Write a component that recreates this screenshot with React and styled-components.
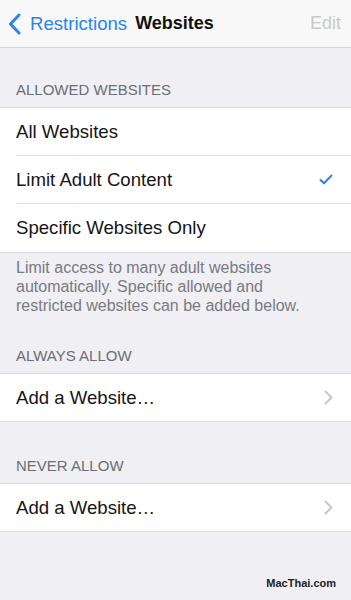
import React from "react";
import styled, { createGlobalStyle } from "styled-components";

const GlobalStyle = createGlobalStyle`
    html, body {
        margin: 0;
        padding: 0;
        background: #efeff4;
    }
    body {
        font-family: "Liberation Sans", Arial, sans-serif;
        -webkit-font-smoothing: antialiased;
    }
`

const Screen = styled.div`
    width: 351px;
    height: 600px;
    background: #efeff4;
    display: flex;
    flex-direction: column;
    overflow: hidden;
`

const NavBar = styled.div`
    box-sizing: border-box;
    height: 48px;
    background: #f8f8f8;
    border-bottom: 1px solid #d6d6da;
    display: flex;
    align-items: center;
    padding: 0 10px 0 8px;
`

const BackButton = styled.div`
    display: flex;
    align-items: center;
    gap: 9px;
    color: #2a84ec;
    font-size: 18.6px;
`

const Title = styled.div`
    margin-left: 8px;
    font-size: 18px;
    font-weight: bold;
    color: #111;
`

const EditButton = styled.div`
    margin-left: auto;
    font-size: 18px;
    color: #c9c9cd;
`

const SectionHeader = styled.div`
    padding: ${props => props.$top}px 16px 8px 16px;
    font-size: 15px;
    line-height: 18px;
    color: #6d6d72;
    text-transform: uppercase;
`

const Group = styled.div`
    background: #fff;
    border-top: 1px solid #dcdce0;
    border-bottom: 1px solid #dcdce0;
`

const Row = styled.div`
    padding-left: 16px;
`

const RowInner = styled.div`
    box-sizing: border-box;
    height: ${props => props.$height || 47}px;
    display: flex;
    align-items: center;
    padding-right: 18px;
    font-size: 18.6px;
    color: #151515;
    border-bottom: ${props => (props.$last ? "none" : "1px solid #e2e2e6")};
`

const RowAccessory = styled.div`
    margin-left: auto;
    display: flex;
    align-items: center;
`

const Footer = styled.div`
    padding: 5px 34px 0 16px;
    font-size: 16px;
    line-height: 19px;
    color: #7a7a7f;
`

const Watermark = styled.div`
    margin-top: auto;
    align-self: flex-end;
    padding: 0 15px 11px 0;
    font-size: 11px;
    font-weight: bold;
    color: #222;
`

const Chevron = () => (
    <svg width="13" height="22" viewBox="0 0 13 22">
        <path d="M11 2 L2.5 11 L11 20" fill="none" stroke="#2a84ec" strokeWidth="3" strokeLinecap="round" strokeLinejoin="round" />
    </svg>
)

const Check = () => (
    <svg width="14" height="11" viewBox="0 0 14 11">
        <path d="M1.5 6 L5 9.3 L12.5 1.5" fill="none" stroke="#2a84ec" strokeWidth="2" strokeLinecap="round" strokeLinejoin="round" />
    </svg>
)

const Disclosure = () => (
    <svg width="9" height="15" viewBox="0 0 9 15">
        <path d="M1.5 1.5 L7.5 7.5 L1.5 13.5" fill="none" stroke="#c7c7cc" strokeWidth="2" strokeLinecap="round" strokeLinejoin="round" />
    </svg>
)

const ListRow = ({ label, accessory, last, height }) => (
    <Row>
        <RowInner $last={last} $height={height}>
            {label}
            {accessory && <RowAccessory>{accessory}</RowAccessory>}
        </RowInner>
    </Row>
)

export default function App() {
    return (
        <Screen>
            <GlobalStyle />

            <NavBar>
                <BackButton>
                    <Chevron />
                    <span>Restrictions</span>
                </BackButton>
                <Title>Websites</Title>
                <EditButton>Edit</EditButton>
            </NavBar>

            <SectionHeader $top={33}>Allowed Websites</SectionHeader>
            <Group>
                <ListRow label="All Websites" height={48} />
                <ListRow label="Limit Adult Content" accessory={<Check />} height={48} />
                <ListRow label="Specific Websites Only" height={48} last />
            </Group>
            <Footer>
                Limit access to many adult websites automatically. Specific allowed and restricted websites can be added below.
            </Footer>

            <SectionHeader $top={32}>Always Allow</SectionHeader>
            <Group>
                <ListRow label="Add a Website…" accessory={<Disclosure />} last />
            </Group>

            <SectionHeader $top={35}>Never Allow</SectionHeader>
            <Group>
                <ListRow label="Add a Website…" accessory={<Disclosure />} last />
            </Group>

            <Watermark>MacThai.com</Watermark>
        </Screen>
    );
}
